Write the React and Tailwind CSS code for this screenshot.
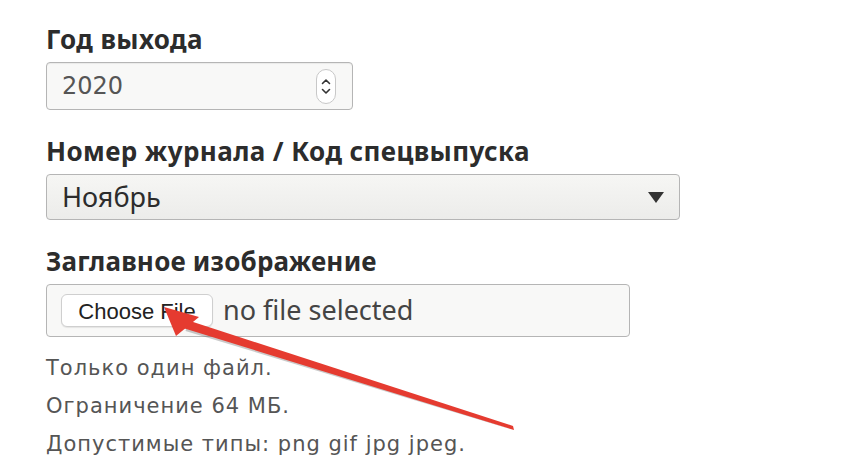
import React from 'react';

const App = () => {
  // Help lines under the upload field
  const hints = ['Только один файл.', 'Ограничение 64 МБ.', 'Допустимые типы: png gif jpg jpeg.'];

  return (
    <div className="relative min-h-screen w-[862px] h-[474px] bg-white overflow-hidden pl-[46px] pt-[24px] font-['Noto_Sans',sans-serif]">
      {/* Year */}
      <div className="text-[26px] leading-[30px] font-bold text-[#2c2c2c] tracking-[0.4px]">Год выхода</div>
      <div className="mt-[8px] w-[307px] h-[48px] bg-[#f8f8f7] border border-[#b5b5b5] rounded-[4px] flex items-center justify-between pl-[15px] pr-[16px] shadow-[inset_0_1px_1px_rgba(0,0,0,0.06)]">
        <span className="text-[24px] text-[#555] font-['DejaVu_Sans',sans-serif]">2020</span>
        {/* Spinner */}
        <div className="w-[20px] h-[35px] rounded-[10px] border border-[#c8c8c8] bg-white flex flex-col items-center justify-center gap-[3px]">
          <svg width="10" height="7" viewBox="0 0 10 7"><path d="M1.5 5.5 L5 2 L8.5 5.5" fill="none" stroke="#333" strokeWidth="1.6" strokeLinecap="round" strokeLinejoin="round" /></svg>
          <svg width="10" height="7" viewBox="0 0 10 7"><path d="M1.5 1.5 L5 5 L8.5 1.5" fill="none" stroke="#333" strokeWidth="1.6" strokeLinecap="round" strokeLinejoin="round" /></svg>
        </div>
      </div>

      {/* Issue */}
      <div className="mt-[26px] text-[26px] leading-[30px] font-bold text-[#2c2c2c] tracking-[0.4px]">Номер журнала / Код спецвыпуска</div>
      <div className="mt-[8px] w-[634px] h-[46px] border border-[#b5b5b5] rounded-[4px] flex items-center justify-between pl-[15px] pr-[15px] bg-gradient-to-b from-[#f6f6f4] to-[#ececea]">
        <span className="text-[27px] text-[#2c2c2c]">Ноябрь</span>
        <svg width="16" height="11" viewBox="0 0 16 11"><path d="M0 0 H16 L8 11 Z" fill="#333" /></svg>
      </div>

      {/* Cover image */}
      <div className="mt-[26px] text-[26px] leading-[30px] font-bold text-[#2c2c2c] tracking-[0.2px]">Заглавное изображение</div>
      <div className="mt-[8px] w-[584px] h-[53px] bg-[#f8f8f7] border border-[#b5b5b5] rounded-[4px] flex items-center pl-[14px]">
        <button className="h-[33px] w-[152px] bg-white border border-[#cfcfcf] rounded-[6px] text-[22px] text-[#222] font-['Liberation_Sans',sans-serif] shadow-[0_1px_1px_rgba(0,0,0,0.08)]">
          Choose File
        </button>
        <span className="ml-[10px] text-[27px] text-[#444]">no file selected</span>
      </div>

      {/* Hints */}
      <div className="mt-[12px] flex flex-col">
        {hints.map((h) => (
          <div key={h} className="text-[21px] leading-[38px] text-[#555] tracking-[1px] font-['DejaVu_Sans',sans-serif]">{h}</div>
        ))}
      </div>

      {/* Red annotation arrow */}
      <svg className="absolute left-0 top-0 pointer-events-none" width="862" height="474" viewBox="0 0 862 474">
        <g transform="translate(1.5,2)" opacity="0.35">
          <path d="M512 428 L186 322 L184 329 Z" fill="#666" />
        </g>
        <path d="M513 426 L514 430 L183 328 L187 320 Z" fill="#e53b30" />
        <path d="M164 307 L199 317 L176 336 Z" fill="#e53b30" />
      </svg>
    </div>
  );
};

export default App;
